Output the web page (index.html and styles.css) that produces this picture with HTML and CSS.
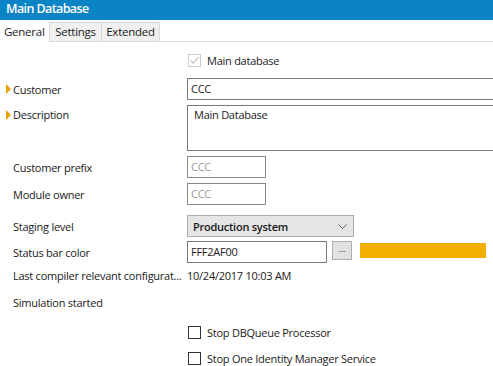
FILE: index.html
```html
<!DOCTYPE html>
<html>
<head>
<meta charset="utf-8">
<link rel="stylesheet" href="styles.css">
</head>
<body>
<div class="titlebar">Main Database</div>
<div class="tabs">
  <div class="tab active t-general">General</div>
  <div class="tab t-settings">Settings</div>
  <div class="tab t-extended">Extended</div>
</div>
<div class="form">
  <div class="row r-main">
    <div class="label"></div>
    <div class="field check-field">
      <span class="cbox disabled"><svg width="11" height="11" viewBox="0 0 11 11"><path d="M1.5 5.5 L4.2 8.2 L9.5 2.2" fill="none" stroke="#bdbdbd" stroke-width="1.1"/></svg></span>
      <span class="cb-text">Main database</span>
    </div>
  </div>
  <div class="row r-customer">
    <div class="label"><span class="mark"></span>Customer</div>
    <div class="field"><div class="input wide">CCC</div></div>
  </div>
  <div class="row r-desc">
    <div class="label top"><span class="mark"></span>Description</div>
    <div class="field"><div class="input wide area">Main Database</div></div>
  </div>
  <div class="row r-prefix">
    <div class="label">Customer prefix</div>
    <div class="field"><div class="input small disabled">CCC</div></div>
  </div>
  <div class="row r-owner">
    <div class="label">Module owner</div>
    <div class="field"><div class="input small disabled">CCC</div></div>
  </div>
  <div class="row r-staging">
    <div class="label">Staging level</div>
    <div class="field">
      <div class="select"><span>Production system</span>
        <svg class="chev" width="9" height="5" viewBox="0 0 9 5"><path d="M0.5 0.5 L4.5 4.5 L8.5 0.5" fill="none" stroke="#606060" stroke-width="1"/></svg>
      </div>
    </div>
  </div>
  <div class="row r-status">
    <div class="label">Status bar color</div>
    <div class="field color-field">
      <div class="input color">FFF2AF00</div>
      <div class="dots">...</div>
      <div class="swatch"></div>
    </div>
  </div>
  <div class="row r-last">
    <div class="label">Last compiler relevant configurat...</div>
    <div class="field">10/24/2017 10:03 AM</div>
  </div>
  <div class="row r-sim">
    <div class="label">Simulation started</div>
    <div class="field"></div>
  </div>
  <div class="row r-stop1">
    <div class="label"></div>
    <div class="field check-field"><span class="cbox"></span><span class="cb-text">Stop DBQueue Processor</span></div>
  </div>
  <div class="row r-stop2">
    <div class="label"></div>
    <div class="field check-field"><span class="cbox"></span><span class="cb-text">Stop One Identity Manager Service</span></div>
  </div>
</div>
</body>
</html>
```
FILE: styles.css
```css
html, body {
  margin: 0;
  padding: 0;
  background: #ffffff;
  overflow: hidden;
}
body {
  width: 493px;
  height: 366px;
  font-family: "Open Sans", "Noto Sans", sans-serif;
  font-size: 11px;
  letter-spacing: -0.25px;
  color: #1a1a1a;
}
.titlebar {
  height: 20px;
  background: #0b84c6;
  color: #ffffff;
  font-weight: 600;
  font-size: 12.5px;
  letter-spacing: -0.6px;
  line-height: 18px;
  padding-left: 6px;
}
.tabs {
  display: flex;
  align-items: flex-end;
  height: 21px;
  border-bottom: 1px solid #d9d9d9;
  box-sizing: border-box;
  margin-top: 1px;
  font-size: 11.5px;
}
.tab {
  box-sizing: border-box;
  height: 19px;
  line-height: 18px;
  background: #f0f0f0;
  border: 1px solid #d9d9d9;
  border-bottom: none;
  text-align: center;
  color: #1a1a1a;
}
.tab.active {
  height: 21px;
  background: #ffffff;
  border-color: #ffffff;
  line-height: 19px;
  text-align: left;
  padding-left: 3px;
  position: relative;
  top: 1px;
}
.t-general { width: 49px; }
.t-settings { width: 52px; border-right: none; }
.t-extended { width: 59px; }

.form {
  display: flex;
  flex-direction: column;
}
.row {
  display: flex;
  align-items: center;
}
.label {
  width: 187px;
  flex: none;
  box-sizing: border-box;
  padding-left: 13px;
  position: relative;
  white-space: nowrap;
}
.label.top {
  align-self: flex-start;
  padding-top: 2px;
}
.mark {
  position: absolute;
  left: 6px;
  top: 50%;
  margin-top: -5px;
  width: 0;
  height: 0;
  border-top: 5px solid transparent;
  border-bottom: 5px solid transparent;
  border-left: 5px solid #e8a200;
}
.label.top .mark { top: 2px; margin-top: 3px; }
.field {
  flex: 1;
  display: flex;
  align-items: center;
  white-space: nowrap;
}

.r-main { margin-top: 8px; height: 20px; }
.r-customer { margin-top: 8px; height: 22px; }
.r-desc { margin-top: 5px; height: 46px; }
.r-prefix { margin-top: 5px; height: 22px; }
.r-owner { margin-top: 5px; height: 22px; }
.r-staging { margin-top: 10px; height: 22px; }
.r-status { margin-top: 4px; height: 22px; }
.r-last { margin-top: 2px; height: 20px; }
.r-sim { margin-top: 7px; height: 20px; }
.r-stop1 { margin-top: 12px; height: 16px; }
.r-stop2 { margin-top: 10px; height: 16px; }

.check-field { padding-left: 1px; }
.cbox {
  box-sizing: border-box;
  width: 13px;
  height: 13px;
  border: 1px solid #333333;
  background: #ffffff;
  display: inline-flex;
  align-items: center;
  justify-content: center;
  flex: none;
}
.cbox.disabled { border-color: #cccccc; }
.cb-text { margin-left: 6px; }

.input {
  box-sizing: border-box;
  height: 22px;
  border: 1px solid #7a7a7a;
  padding-left: 3px;
  line-height: 19px;
  background: #ffffff;
}
.input.wide { width: 320px; }
.input.area {
  height: 46px;
  padding-left: 6px;
  line-height: 18px;
  align-self: flex-start;
}
.input.small { width: 79px; height: 22px; }
.input.disabled { color: #9a9a9a; border-color: #8a8a8a; }
.input.color { width: 140px; }

.select {
  box-sizing: border-box;
  width: 167px;
  height: 22px;
  background: #e5e5e5;
  border: 1px solid #adadad;
  display: flex;
  align-items: center;
  justify-content: space-between;
  padding: 0 6px 0 5px;
  font-weight: 600;
}
.chev { flex: none; margin-top: 1px; }

.color-field { align-items: flex-start; }
.dots {
  box-sizing: border-box;
  width: 20px;
  height: 19px;
  margin-left: 5px;
  background: #e1e1e1;
  border: 1px solid #adadad;
  font-size: 9px;
  line-height: 14px;
  text-align: center;
  color: #333;
}
.swatch {
  width: 126px;
  height: 15px;
  margin-left: 8px;
  margin-top: 2px;
  background: #f2af00;
}
```
